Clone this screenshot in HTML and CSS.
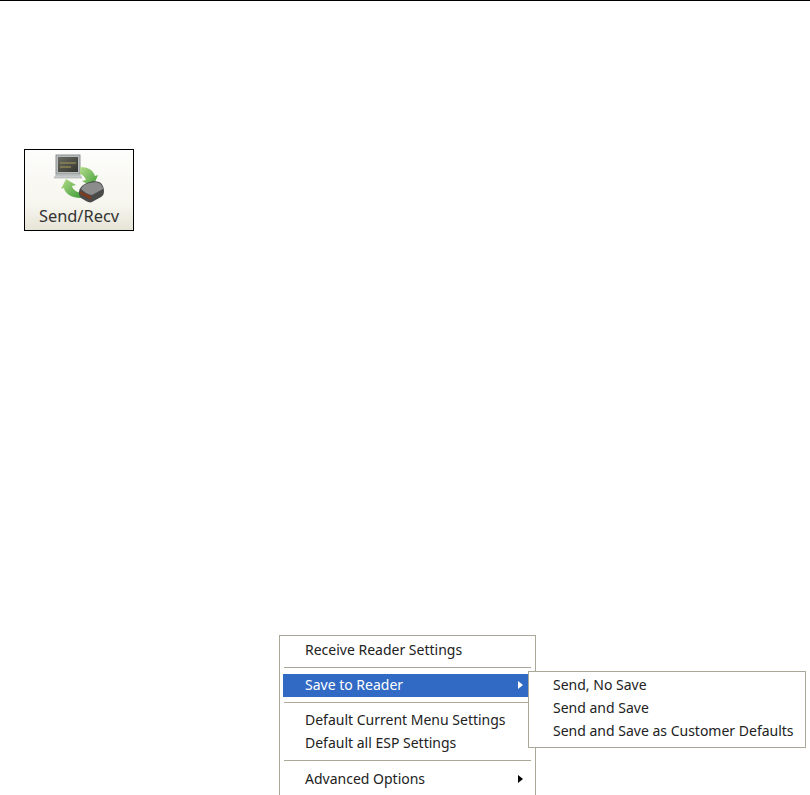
FILE: index.html
```html
<!DOCTYPE html>
<html lang="en">
<head>
  <meta charset="UTF-8">
  <title>Send/Recv</title>
  <link rel="stylesheet" href="styles.css">
</head>
<body>

  <div class="page">

    <div class="send-button">
      <svg class="send-icon" width="60" height="56" viewBox="0 0 60 56">
        <defs>
          <linearGradient id="screen" x1="0" y1="0" x2="1" y2="1">
            <stop offset="0" stop-color="#6a6b62"/>
            <stop offset="1" stop-color="#33352f"/>
          </linearGradient>
          <linearGradient id="arrow" x1="0" y1="0" x2="1" y2="1">
            <stop offset="0" stop-color="#b4dc8c"/>
            <stop offset="1" stop-color="#3f9c36"/>
          </linearGradient>
        </defs>
        <!-- laptop -->
        <rect x="6" y="5" width="24" height="19" fill="#b8bcbc" stroke="#8a8f8f"/>
        <rect x="8" y="7" width="20" height="15" fill="url(#screen)"/>
        <path d="M10 13h16M10 17h11" stroke="#8c8454" stroke-width="1.5"/>
        <path d="M6 25h24l2 3H4z" fill="#c6caca" stroke="#9a9e9e" stroke-width=".5"/>
        <!-- arrows -->
        <path d="M30 17c8 0 13 3 15 9l3-1-5 12-11-6 4-1c-1-3-3-5-6-6z" fill="url(#arrow)"/>
        <path d="M31 48c-9 0-16-4-17-10l-3 1 5-10 10 6-4 1c1 4 5 6 9 7z" fill="url(#arrow)"/>
        <!-- reader -->
        <path d="M29 43c0-5 3-8 8-10 4-2 9-2 12-1 3 1 5 5 5 9 0 3-1 5-3 6l-9 5c-2 1-4 0-6-1l-5-3c-1-1-2-3-2-5z" fill="#4a4a4a"/>
        <path d="M31 39c1-3 4-5 8-6 4-1 8-1 10 0 2 1 4 4 4 6l-11 6c-3 0-8-3-11-6z" fill="#8c8c8c"/>
        <path d="M30 44l11 6 0-4-11-5z" fill="#7a3c22"/>
      </svg>
      <span class="send-label">Send/Recv</span>
    </div>

    <div class="menu">
      <div class="menu-item">Receive Reader Settings</div>
      <div class="menu-sep"></div>
      <div class="menu-item active">Save to Reader<span class="arrow"></span>
        <div class="submenu">
          <div class="menu-item">Send, No Save</div>
          <div class="menu-item">Send and Save</div>
          <div class="menu-item">Send and Save as Customer Defaults</div>
        </div>
      </div>
      <div class="menu-sep"></div>
      <div class="menu-item">Default Current Menu Settings</div>
      <div class="menu-item">Default all ESP Settings</div>
      <div class="menu-sep menu-sep-last"></div>
      <div class="menu-item">Advanced Options<span class="arrow"></span></div>
    </div>

  </div>

</body>
</html>
```

FILE: styles.css
```css
* {
  margin: 0;
  padding: 0;
  box-sizing: border-box;
}

html, body {
  height: 100%;
  overflow: hidden;
}

body {
  background-color: #fff;
  font-family: "Noto Sans", sans-serif;
  color: #222;
}

.page {
  height: 100%;
  border-top: 1px solid #000;
  padding-top: 148px;
}

.send-button {
  width: 110px;
  height: 82px;
  margin-left: 24px;
  border: 1px solid #000;
  background: linear-gradient(#fdfdfb, #f6f5ee 70%, #e6e4d6);
  display: flex;
  flex-direction: column;
  align-items: center;
}

.send-icon {
  display: block;
  margin-left: 2px;
  filter: blur(0.5px);
}

.send-label {
  font-size: 16.4px;
  line-height: 20px;
  color: #333;
}

.menu {
  position: relative;
  width: 257px;
  margin-top: 404px;
  margin-left: 279px;
  border: 1px solid #aca899;
  border-bottom: none;
  padding: 3px 3px 12px;
  background-color: #fff;
}

.menu-item {
  position: relative;
  height: 23px;
  line-height: 22px;
  padding-left: 22px;
  font-size: 14px;
}

.menu-sep {
  height: 1px;
  margin: 5px 1px 6px;
  background-color: #aca899;
}

.menu-sep-last {
  margin-bottom: 7px;
}

.menu-item.active {
  background-color: #316ac5;
  color: #fff;
}

.arrow {
  position: absolute;
  right: 9px;
  top: 7px;
  border-left: 5px solid #000;
  border-top: 4px solid transparent;
  border-bottom: 4px solid transparent;
}

.active > .arrow {
  border-left-color: #fff;
}

.submenu {
  position: absolute;
  left: 245px;
  top: -3px;
  width: 278px;
  height: 77px;
  border: 1px solid #aca899;
  padding: 2px 2px;
  background-color: #fff;
  color: #222;
}
```
